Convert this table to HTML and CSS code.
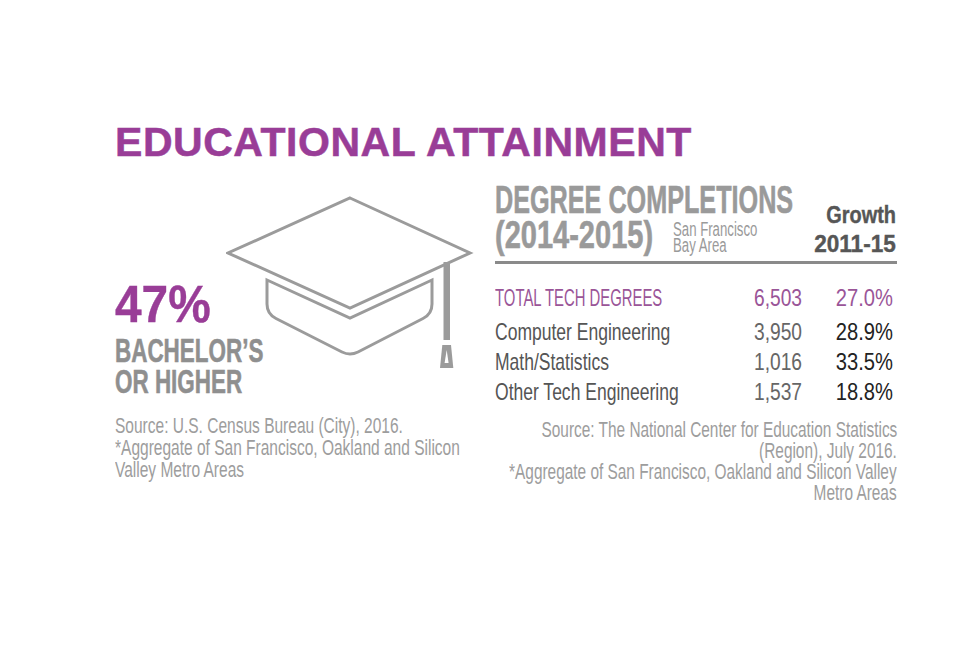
FILE: index.html
```html
<!DOCTYPE html>
<html lang="en">
<head>
<meta charset="utf-8">
<title>Educational Attainment</title>
<link rel="stylesheet" href="styles.css">
</head>
<body>
<div class="page">
  <h1 class="title">EDUCATIONAL ATTAINMENT</h1>
  <div class="main">
    <section class="left">
      <svg class="cap" viewBox="0 0 248 176" width="248" height="176" aria-hidden="true">
        <path class="cap-line" d="M124,2 L244,57 L124,112 L2,57 Z"/>
        <path class="cap-line" d="M41,84 L124,122 L206,84 L206,108 Q206,118 197,122.5 L132,156 Q124,160 116,156 L50,122.5 Q41,118 41,108 Z"/>
        <rect class="cap-fill" x="217.5" y="66" width="6.5" height="78"/>
        <path class="cap-fill" d="M216.3,149 L225,149 L227.3,172 L214,172 Z"/>
        <path class="cap-hole" d="M220.7,154 L222.6,167 L218.6,167 Z"/>
      </svg>
      <div class="stack">
        <div class="sx pct">47%</div>
        <div class="sx bach first">BACHELOR’S</div>
        <div class="sx bach">OR HIGHER</div>
        <div class="src src-left">
          <span class="sx">Source: U.S. Census Bureau (City), 2016.</span>
          <span class="sx">*Aggregate of San Francisco, Oakland and Silicon</span>
          <span class="sx">Valley Metro Areas</span>
        </div>
      </div>
    </section>
    <section class="right">
      <div class="head">
        <div class="deg">
          <div class="sx deg1">DEGREE COMPLETIONS</div>
          <div class="deg-row">
            <div class="sx years">(2014-2015)</div>
            <div class="area">
              <span class="sx">San Francisco</span>
              <span class="sx">Bay Area</span>
            </div>
          </div>
        </div>
        <div class="growth">
          <span class="sx sx-r g1">Growth</span>
          <span class="sx sx-r g2">2011-15</span>
        </div>
      </div>
      <div class="rule"></div>
      <div class="table">
        <div class="sx lbl caps total">TOTAL TECH DEGREES</div>
        <div class="sx sx-r num total">6,503</div>
        <div class="sx sx-r gr total">27.0%</div>

        <div class="sx lbl">Computer Engineering</div>
        <div class="sx sx-r num">3,950</div>
        <div class="sx sx-r gr">28.9%</div>

        <div class="sx lbl">Math/Statistics</div>
        <div class="sx sx-r num">1,016</div>
        <div class="sx sx-r gr">33.5%</div>

        <div class="sx lbl">Other Tech Engineering</div>
        <div class="sx sx-r num">1,537</div>
        <div class="sx sx-r gr">18.8%</div>
      </div>
      <div class="src src-right">
        <span class="sx sx-r">Source: The National Center for Education Statistics</span>
        <span class="sx sx-r">(Region), July 2016.</span>
        <span class="sx sx-r">*Aggregate of San Francisco, Oakland and Silicon Valley</span>
        <span class="sx sx-r">Metro Areas</span>
      </div>
    </section>
  </div>
</div>
</body>
</html>
```

FILE: styles.css
```css
* {
  box-sizing: border-box;
  margin: 0;
  padding: 0;
}

html, body {
  background: #ffffff;
}

body {
  margin: 0;
  font-family: "Liberation Sans", Arial, sans-serif;
}

.page {
  width: 960px;
  height: 655px;
  padding: 122px 0 0 115px;
  overflow: hidden;
}

.title {
  font-size: 41px;
  line-height: 41px;
  font-weight: 700;
  letter-spacing: 0.55px;
  color: #993d97;
  white-space: nowrap;
  -webkit-text-stroke: 0.5px #993d97;
}

.main {
  display: flex;
  align-items: flex-start;
}

/* horizontally condensed text */
.sx {
  display: block;
  white-space: nowrap;
  transform-origin: left center;
  transform: scaleX(var(--sx, 1));
}

.sx-r {
  text-align: right;
  transform-origin: right center;
}

/* left column */
.left {
  width: 380px;
  flex: none;
  display: grid;
}

.cap {
  grid-area: 1 / 1;
  margin: 33px 0 0 111px;
  display: block;
}

.cap-line {
  fill: none;
  stroke: #9b9b9b;
  stroke-width: 3;
  stroke-linejoin: miter;
}

.cap-fill {
  fill: #9b9b9b;
}

.cap-hole {
  fill: #ffffff;
}

.stack {
  grid-area: 1 / 1;
  margin-top: 116px;
}

.pct {
  font-size: 52px;
  line-height: 50px;
  font-weight: 700;
  color: #993d97;
  -webkit-text-stroke: 0.4px #993d97;
  --sx: 0.92;
}

.bach {
  font-size: 34px;
  line-height: 31px;
  font-weight: 700;
  color: #8f8f8f;
  -webkit-text-stroke: 0.6px #8f8f8f;
  --sx: 0.66;
}

.bach.first {
  margin-top: 6px;
}

.src {
  font-size: 22px;
  line-height: 22px;
  color: #9d9d9d;
  --sx: 0.705;
}

.src-left {
  margin-top: 18px;
}

/* right column */
.right {
  width: 402px;
  flex: none;
  margin-top: 19px;
}

.head {
  display: flex;
  align-items: flex-start;
}

.deg {
  flex: 1;
  min-width: 0;
  font-size: 39px;
  line-height: 35px;
  font-weight: 700;
  color: #9a9a9a;
  -webkit-text-stroke: 0.6px #9a9a9a;
}

.deg1 {
  --sx: 0.646;
}

.deg-row {
  display: flex;
  align-items: flex-start;
}

.years {
  flex: none;
  width: 178px;
  min-width: 0;
  --sx: 0.744;
}

.area {
  margin-top: 4px;
  font-size: 20px;
  line-height: 16px;
  font-weight: 400;
  color: #9a9a9a;
  -webkit-text-stroke: 0;
  --sx: 0.66;
}

.growth {
  flex: none;
  width: 110px;
  margin-top: 18px;
  padding-right: 1px;
  display: flex;
  flex-direction: column;
  align-items: flex-end;
  font-size: 24px;
  line-height: 29px;
  font-weight: 700;
  color: #565656;
  -webkit-text-stroke: 0.4px #565656;
}

.g1 { --sx: 0.83; }
.g2 { --sx: 0.94; }

.rule {
  margin-top: 3px;
  border-top: 3px solid #8a8a8a;
}

.table {
  margin-top: 19px;
  padding-right: 4px;
  display: grid;
  grid-template-columns: minmax(0, 1fr) 80px 91px;
  grid-template-rows: 34px 30px 30px 30px;
  align-items: start;
  font-size: 24px;
  line-height: 30px;
}

.lbl {
  color: #555555;
  --sx: 0.73;
}

.lbl.caps {
  --sx: 0.62;
}

.num {
  color: #666666;
  --sx: 0.8;
}

.gr {
  color: #222222;
  --sx: 0.84;
}

.table .total {
  color: #9a5598;
}

.src-right {
  margin-top: 12px;
  line-height: 21px;
  display: flex;
  flex-direction: column;
  align-items: flex-end;
  --sx: 0.70;
}
```
